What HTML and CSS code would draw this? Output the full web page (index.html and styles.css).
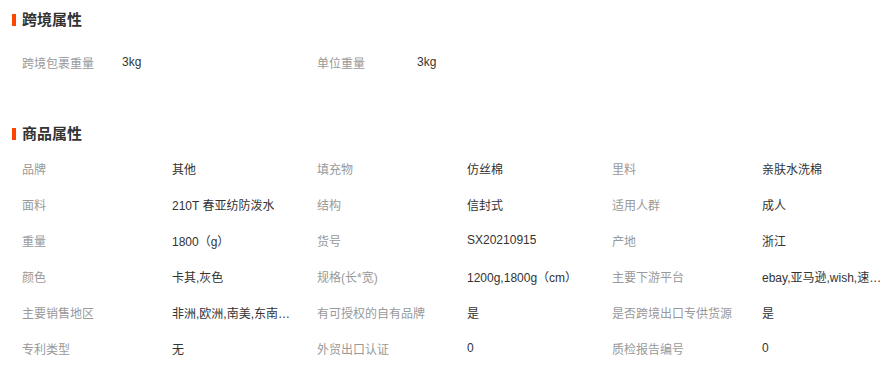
FILE: index.html
```html
<!DOCTYPE html>
<html lang="zh-CN">
<head>
<meta charset="utf-8">
<title>属性</title>
<link rel="stylesheet" href="styles.css">
</head>
<body>
<section class="block block-cross">
  <h2 class="block-title"><span class="bar"></span>跨境属性</h2>
  <div class="grid grid-cross">
    <div class="cell"><span class="label">跨境包裹重量</span><span class="value">3kg</span></div>
    <div class="cell"><span class="label">单位重量</span><span class="value">3kg</span></div>
  </div>
</section>
<section class="block block-goods">
  <h2 class="block-title"><span class="bar"></span>商品属性</h2>
  <div class="grid grid-goods">
    <div class="cell"><span class="label">品牌</span><span class="value">其他</span></div>
    <div class="cell"><span class="label">填充物</span><span class="value">仿丝棉</span></div>
    <div class="cell"><span class="label">里料</span><span class="value">亲肤水洗棉</span></div>
    <div class="cell"><span class="label">面料</span><span class="value">210T 春亚纺防泼水</span></div>
    <div class="cell"><span class="label">结构</span><span class="value">信封式</span></div>
    <div class="cell"><span class="label">适用人群</span><span class="value">成人</span></div>
    <div class="cell"><span class="label">重量</span><span class="value">1800（g）</span></div>
    <div class="cell"><span class="label">货号</span><span class="value">SX20210915</span></div>
    <div class="cell"><span class="label">产地</span><span class="value">浙江</span></div>
    <div class="cell"><span class="label">颜色</span><span class="value">卡其,灰色</span></div>
    <div class="cell"><span class="label">规格(长*宽)</span><span class="value">1200g,1800g（cm）</span></div>
    <div class="cell"><span class="label">主要下游平台</span><span class="value">ebay,亚马逊,wish,速卖通,独立站</span></div>
    <div class="cell"><span class="label">主要销售地区</span><span class="value">非洲,欧洲,南美,东南亚,北美,东北亚,中东</span></div>
    <div class="cell"><span class="label">有可授权的自有品牌</span><span class="value">是</span></div>
    <div class="cell"><span class="label">是否跨境出口专供货源</span><span class="value">是</span></div>
    <div class="cell"><span class="label">专利类型</span><span class="value">无</span></div>
    <div class="cell"><span class="label">外贸出口认证</span><span class="value">0</span></div>
    <div class="cell"><span class="label">质检报告编号</span><span class="value">0</span></div>
  </div>
</section>
</body>
</html>
```
FILE: styles.css
```css
html, body {
  margin: 0;
  padding: 0;
  background: #fff;
}
body {
  font-family: "Liberation Sans", "Noto Sans CJK SC", sans-serif;
  font-size: 12px;
  color: #333;
  width: 889px;
}
.block-title {
  display: flex;
  align-items: center;
  gap: 6px;
  margin: 0;
  padding-left: 12px;
  height: 20px;
  line-height: 20px;
  font-size: 15px;
  font-weight: bold;
  color: #333;
}
.bar {
  display: block;
  width: 4px;
  height: 12px;
  background: #ff4400;
}
.block-cross {
  padding-top: 10px;
}
.block-cross .grid {
  margin-top: 14px;
}
.block-goods {
  padding-top: 44px;
}
.block-goods .grid {
  margin-top: 6px;
}
.grid {
  display: grid;
  padding-left: 22px;
  grid-template-columns: repeat(3, 295px);
}
.cell {
  display: flex;
  height: 36px;
  align-items: center;
  white-space: nowrap;
}
.grid-cross .label {
  width: 100px;
}
.grid-goods .label {
  width: 150px;
}
.label {
  flex: none;
  color: #999;
}
.value {
  color: #333;
  max-width: 125px;
  overflow: hidden;
  text-overflow: ellipsis;
}
```
